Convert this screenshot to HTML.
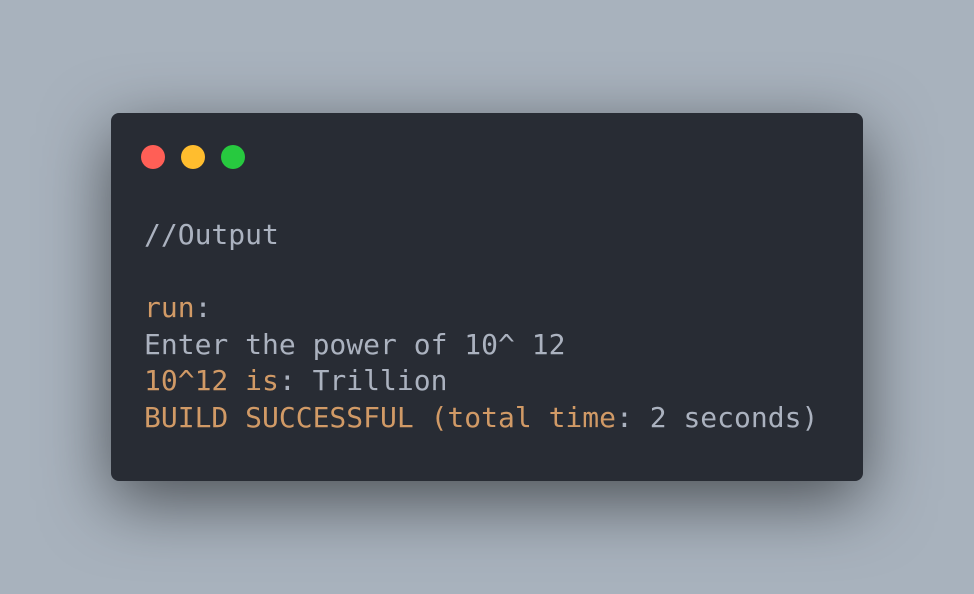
<!DOCTYPE html>
<html><head><style>
html,body{margin:0;padding:0;}
body{width:974px;height:594px;background:#a8b2bd;position:relative;overflow:hidden;}
.win{position:absolute;left:111px;top:113px;width:752px;height:368px;background:#282c34;border-radius:8px;box-shadow:0 20px 68px rgba(0,0,0,0.55);}
.dot{position:absolute;top:32px;width:24px;height:24px;border-radius:50%;}
pre{position:absolute;left:33px;top:104px;margin:0;font-family:"DejaVu Sans Mono","Liberation Mono",monospace;font-size:28px;line-height:36.5px;color:#abb2bf;}
.o{color:#d19a66;}
</style></head><body>
<div class="win">
<div class="dot" style="left:30px;background:#ff5f56;"></div>
<div class="dot" style="left:70px;background:#ffbd2e;"></div>
<div class="dot" style="left:110px;background:#27c93f;"></div>
<pre>//Output

<span class="o">run</span>:
Enter the power of 10^ 12
<span class="o">10^12 is</span>: Trillion
<span class="o">BUILD SUCCESSFUL (total time</span>: 2 seconds)</pre>
</div>
</body></html>
